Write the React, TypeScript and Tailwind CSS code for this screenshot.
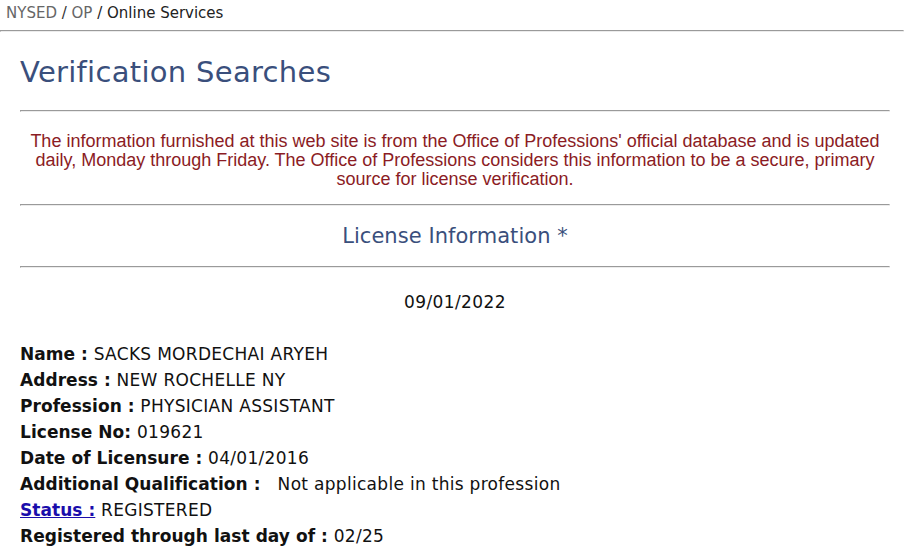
const FIELDS: { label: string; value: string; link?: boolean; gap?: boolean }[] = [
  { label: 'Name :', value: 'SACKS MORDECHAI ARYEH' },
  { label: 'Address :', value: 'NEW ROCHELLE NY' },
  { label: 'Profession :', value: 'PHYSICIAN ASSISTANT' },
  { label: 'License No:', value: '019621' },
  { label: 'Date of Licensure :', value: '04/01/2016' },
  { label: 'Additional Qualification :', value: 'Not applicable in this profession', gap: true },
  { label: 'Status :', value: 'REGISTERED', link: true },
  { label: 'Registered through last day of :', value: '02/25' },
];

const Rule = ({ className = '' }: { className?: string }) => (
  <div className={`h-[2px] border-t border-l border-t-[#9a9a9a] border-l-[#9a9a9a] border-b border-r border-b-[#ececec] border-r-[#ececec] ${className}`} />
);

export default function App() {
  return (
    <div className="min-h-screen w-full bg-white font-['DejaVu_Sans',Verdana,sans-serif] text-[#111]">
      <div className="px-[6px] pt-[4px] text-[15px] leading-[19px]">
        <span className="text-[#666]">NYSED</span>
        <span className="text-[#333]"> / </span>
        <span className="text-[#666]">OP</span>
        <span className="text-[#222]"> / Online Services</span>
      </div>
      <Rule className="mt-[7px]" />

      <div className="mx-[15px] w-[870px] pl-[5px]">
        <h1 className="mt-[23px] text-[29px] leading-[34px] tracking-[0.3px] text-[#3a4f7c]">Verification Searches</h1>
      </div>

      <div className="ml-[20px] w-[870px]">
        <Rule className="mt-[21px]" />
        <p className="mt-[20px] text-center font-['Liberation_Sans_Narrow','Arial_Narrow','Liberation_Sans',sans-serif] text-[18px] leading-[19px] text-[#8b1c24]">
          The information furnished at this web site is from the Office of Professions' official database and is updated daily, Monday through Friday. The Office of Professions considers this information to be a secure, primary source for license verification.
        </p>
        <Rule className="mt-[15px]" />
        <h2 className="mt-[17px] text-center text-[21px] leading-[26px] tracking-[0.05px] text-[#3a4f7c]">License Information *</h2>
        <Rule className="mt-[17px]" />
        <div className="mt-[24px] text-center text-[17px] leading-[20px] tracking-[0.4px]">09/01/2022</div>

        <div className="mt-[29px] flex flex-col text-[17px] leading-[26px] tracking-[0.3px]">
          {FIELDS.map((f) => (
            <div key={f.label} className="whitespace-nowrap">
              {f.link ? (
                <a href="#" className="font-bold tracking-[0.05px] text-[#1a0dab] underline">{f.label}</a>
              ) : (
                <span className="font-bold tracking-[0.05px]">{f.label}</span>
              )}
              <span>{f.gap ? '\u00a0\u00a0\u00a0' : ' '}{f.value}</span>
            </div>
          ))}
        </div>
      </div>
    </div>
  );
}
